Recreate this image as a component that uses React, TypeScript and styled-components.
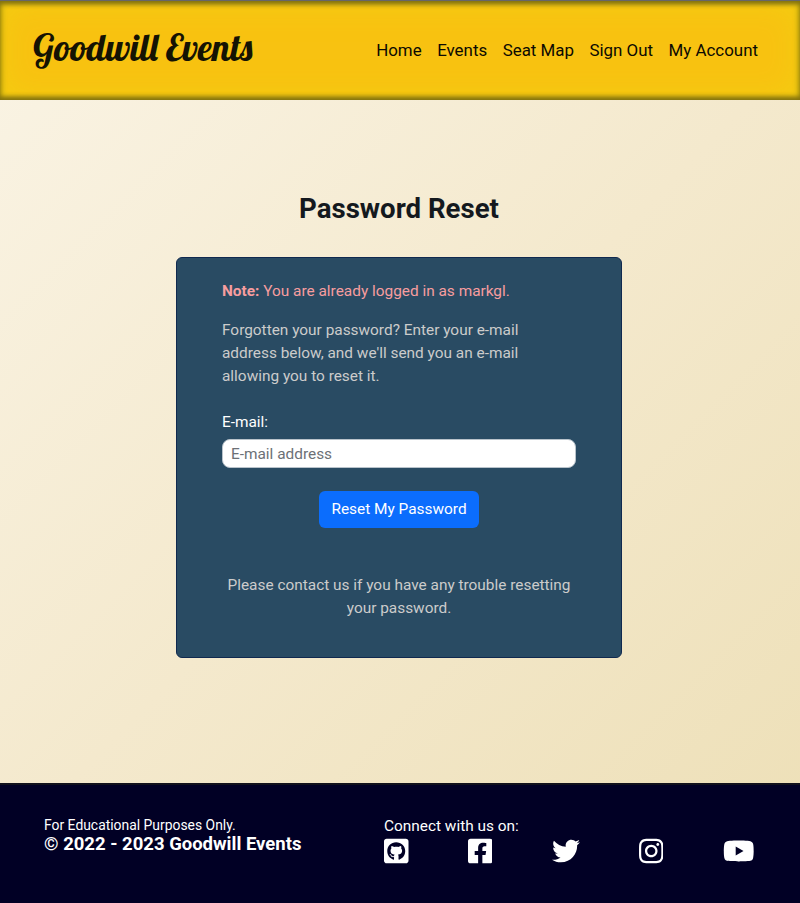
import React from "react";
import styled, { createGlobalStyle } from "styled-components";
import { FaGithubSquare, FaFacebookSquare, FaTwitter, FaInstagram, FaYoutube } from "react-icons/fa";

const GlobalStyle = createGlobalStyle`
  *, *::before, *::after { box-sizing: border-box; }
  body {
    margin: 0;
    font-family: Roboto, "Liberation Sans", sans-serif;
    font-size: 15.4px;
    line-height: 23px;
    color: #14191e;
  }
  p, h1 { margin: 0; }
`;

const Page = styled.div`
  display: flex;
  flex-direction: column;
  min-height: 903px;
  background: linear-gradient(135deg, #faf4e5 0%, #f4e9cd 50%, #eddfb6 100%);
`;

const Header = styled.header`
  display: flex;
  justify-content: space-between;
  align-items: center;
  height: 100px;
  padding: 0 42px 2px 33px;
  border-top: 1px solid #66666a;
  background: #f8c211;
  box-shadow: inset 0 5px 5px -2px #80700f, inset 0 -5px 5px -2px #80700f,
    inset 0 0 6px 1px #a3900f, inset 0 0 34px #f2d012;
`;

const Brand = styled.a`
  margin-top: -5px;
  font: 400 36.9px/48px Lobster, "Lobster Two", cursive;
  white-space: nowrap;
  color: #151303;
`;

const Nav = styled.nav`
  display: flex;
  gap: 15.5px;
`;

const NavLink = styled.a`
  font-size: 16.9px;
  line-height: 24px;
  color: #0c0a02;
`;

const Main = styled.main`
  flex: 1;
  display: flex;
  flex-direction: column;
  align-items: center;
  padding: 92px 2px 0 0;
`;

const Title = styled.h1`
  font-size: 27.6px;
  font-weight: 700;
  line-height: 34px;
`;

const Card = styled.section`
  display: flex;
  flex-direction: column;
  width: 446px;
  height: 401px;
  margin-top: 31px;
  padding: 22px 45px 0;
  border: 1px solid #10294f;
  border-radius: 6px;
  background: #294b63;
  color: #cccccb;
`;

const Note = styled.p`
  color: #f79d9f;
`;

const Intro = styled.p`
  width: 310px;
  margin-top: 16px;
`;

const Label = styled.label`
  margin-top: 23px;
  color: #fff;
`;

const Input = styled.input`
  height: 29px;
  margin-top: 5px;
  padding: 0 8px;
  border: 1px solid #b9c3cb;
  border-radius: 8px;
  font: inherit;
  background: #fff;
  &::placeholder { color: #6c7076; opacity: 1; }
`;

const SubmitButton = styled.button`
  align-self: center;
  width: 160px;
  height: 37px;
  margin-top: 23px;
  padding: 0;
  border: 0;
  border-radius: 6px;
  font: inherit;
  color: #fff;
  background: #0b6dfd;
`;

const Help = styled.p`
  margin-top: 46px;
  text-align: center;
`;

const Footer = styled.footer`
  display: grid;
  grid-template-columns: 340px 370px;
  height: 120px;
  padding: 32px 0 0 44px;
  border-top: 2px solid #11111c;
  background: #010025;
  color: #fff;
`;

const Disclaimer = styled.p`
  font-size: 13.9px;
  line-height: 17px;
`;

const Copyright = styled.p`
  font-size: 18.5px;
  font-weight: 700;
  line-height: 21px;
`;

const Connect = styled.p`
  font-size: 15.4px;
  line-height: 18px;
`;

const SocialRow = styled.div`
  display: flex;
  justify-content: space-between;
  align-items: center;
  height: 32px;
`;

const SocialLink = styled.a<{ $width: number }>`
  display: flex;
  width: ${({ $width }) => $width}px;

  svg {
    width: 100%;
    height: 28px;
  }
`;

const links = ["Home", "Events", "Seat Map", "Sign Out", "My Account"];

const socials = [
  { Icon: FaGithubSquare, name: "GitHub", width: 24.5 },
  { Icon: FaFacebookSquare, name: "Facebook", width: 24.5 },
  { Icon: FaTwitter, name: "Twitter", width: 28 },
  { Icon: FaInstagram, name: "Instagram", width: 24.5 },
  { Icon: FaYoutube, name: "YouTube", width: 31.5 },
];

export default function App() {
  return (
    <>
      <GlobalStyle />
      <Page>
        <Header>
          <Brand>Goodwill Events</Brand>
          <Nav>
            {links.map((link) => (
              <NavLink key={link}>{link}</NavLink>
            ))}
          </Nav>
        </Header>
        <Main>
          <Title>Password Reset</Title>
          <Card>
            <Note>
              <strong>Note:</strong> You are already logged in as markgl.
            </Note>
            <Intro>
              Forgotten your password? Enter your e-mail address below, and we'll send you an e-mail allowing you to
              reset it.
            </Intro>
            <Label htmlFor="email">E-mail:</Label>
            <Input id="email" type="email" placeholder="E-mail address" />
            <SubmitButton type="button">Reset My Password</SubmitButton>
            <Help>Please contact us if you have any trouble resetting your password.</Help>
          </Card>
        </Main>
        <Footer>
          <div>
            <Disclaimer>For Educational Purposes Only.</Disclaimer>
            <Copyright>© 2022 - 2023 Goodwill Events</Copyright>
          </div>
          <div>
            <Connect>Connect with us on:</Connect>
            <SocialRow>
              {socials.map(({ Icon, name, width }) => (
                <SocialLink key={name} $width={width}>
                  <Icon />
                </SocialLink>
              ))}
            </SocialRow>
          </div>
        </Footer>
      </Page>
    </>
  );
}
